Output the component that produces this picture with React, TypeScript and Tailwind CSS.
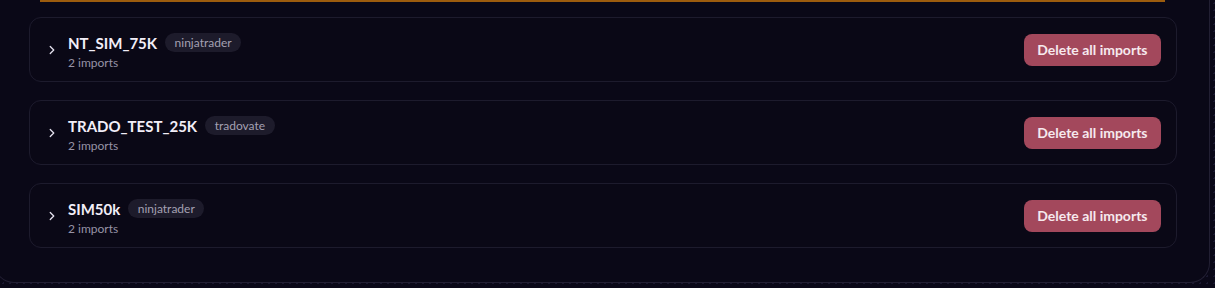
import { ChevronRight } from 'lucide-react'

const accounts = [
  { name: 'NT_SIM_75K', platform: 'ninjatrader', imports: 2 },
  { name: 'TRADO_TEST_25K', platform: 'tradovate', imports: 2 },
  { name: 'SIM50k', platform: 'ninjatrader', imports: 2 },
]

function AccountRow({ name, platform, imports }: { name: string; platform: string; imports: number }) {
  return (
    <div className="flex h-[65px] items-center justify-between rounded-xl border border-[#1d1b2d] bg-[#0a0816] pl-[15px] pr-[15px]">
      <div className="flex items-center gap-[9px]">
        <ChevronRight className="mt-[1px] h-[14px] w-[14px] text-[#e4e0ee]" strokeWidth={2.25} />
        <div className="flex flex-col pt-[4px]">
          <div className="flex items-center gap-[8px]">
            <span className="text-[15px] font-bold leading-[22px] text-[#f2eef8]">{name}</span>
            <span className="rounded-full bg-[#1d1b2b] px-[9.5px] text-[12px] leading-[19px] text-[#a4a0b2]">
              {platform}
            </span>
          </div>
          <span className="text-[12px] leading-[18px] text-[#9793a6]">{imports} imports</span>
        </div>
      </div>
      <button className="h-[32px] rounded-lg bg-[#a3485c] px-[13.5px] text-[14px] font-bold text-[#f6e9ee]">
        Delete all imports
      </button>
    </div>
  )
}

export default function App() {
  return (
    <div
      className="h-[288px] w-[1215px] overflow-hidden bg-[#0a0818] bg-[radial-gradient(#1a1830_1px,transparent_1px)] bg-[size:7px_7px]"
      style={{ fontFamily: 'Lato, "Noto Sans", sans-serif' }}
    >
      <div className="-ml-[6px] h-[283px] w-[1216px] rounded-b-[20px] border-r border-b border-l border-[#221f33] bg-[#0a0817] pl-[34px] pr-[32px] pb-[33px]">
        <div className="ml-[11px] mr-[12px] h-[2px] bg-[#9c5c0e]" />
        <div className="mt-[15px] flex flex-col gap-[18px]">
          {accounts.map((a) => (
            <AccountRow key={a.name} {...a} />
          ))}
        </div>
      </div>
    </div>
  )
}
